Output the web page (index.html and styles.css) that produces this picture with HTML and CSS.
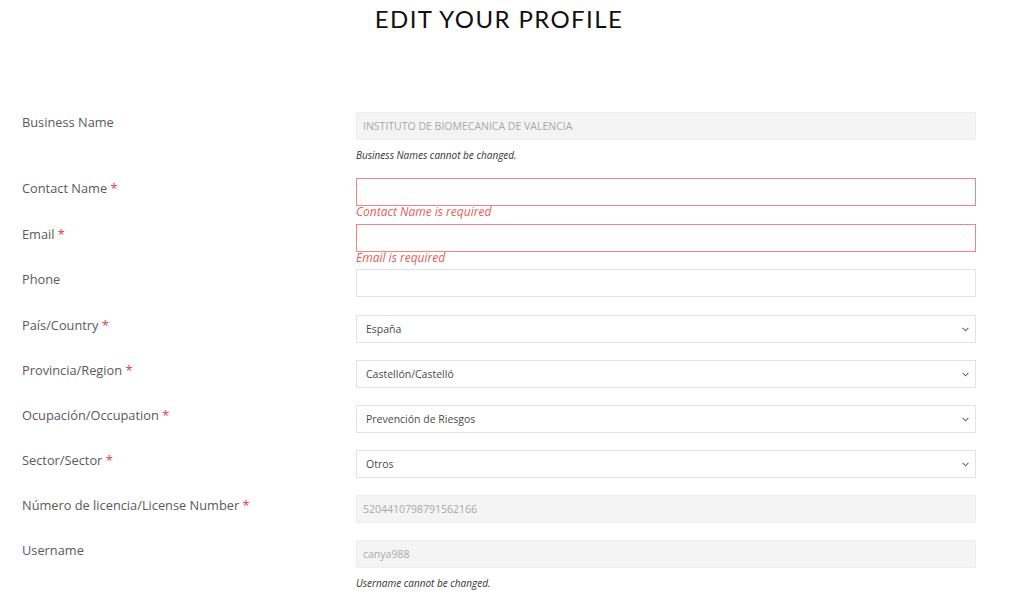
FILE: index.html
```html
<!DOCTYPE html>
<html>
<head>
<meta charset="utf-8">
<link rel="stylesheet" href="styles.css">
</head>
<body>
<div class="page">
  <h1 class="title">EDIT YOUR PROFILE</h1>
  <form class="form">
    <div class="row row-help">
      <label class="label">Business Name</label>
      <div class="field">
        <div class="input disabled">INSTITUTO DE BIOMECANICA DE VALENCIA</div>
        <div class="help">Business Names cannot be changed.</div>
      </div>
    </div>
    <div class="row row-error row-first-error">
      <label class="label">Contact Name <span class="req">*</span></label>
      <div class="field">
        <div class="input error"></div>
        <div class="err">Contact Name is required</div>
      </div>
    </div>
    <div class="row row-error">
      <label class="label">Email <span class="req">*</span></label>
      <div class="field">
        <div class="input error"></div>
        <div class="err">Email is required</div>
      </div>
    </div>
    <div class="row row-phone">
      <label class="label">Phone</label>
      <div class="field">
        <div class="input"></div>
      </div>
    </div>
    <div class="row">
      <label class="label">País/Country <span class="req">*</span></label>
      <div class="field">
        <div class="input select">España<svg class="chev" viewBox="0 0 7 5" width="7" height="5"><path d="M0.6 0.8 L3.5 3.8 L6.4 0.8" fill="none" stroke="#6a6a6a" stroke-width="1.1"/></svg></div>
      </div>
    </div>
    <div class="row">
      <label class="label">Provincia/Region <span class="req">*</span></label>
      <div class="field">
        <div class="input select">Castellón/Castelló<svg class="chev" viewBox="0 0 7 5" width="7" height="5"><path d="M0.6 0.8 L3.5 3.8 L6.4 0.8" fill="none" stroke="#6a6a6a" stroke-width="1.1"/></svg></div>
      </div>
    </div>
    <div class="row">
      <label class="label">Ocupación/Occupation <span class="req">*</span></label>
      <div class="field">
        <div class="input select">Prevención de Riesgos<svg class="chev" viewBox="0 0 7 5" width="7" height="5"><path d="M0.6 0.8 L3.5 3.8 L6.4 0.8" fill="none" stroke="#6a6a6a" stroke-width="1.1"/></svg></div>
      </div>
    </div>
    <div class="row">
      <label class="label">Sector/Sector <span class="req">*</span></label>
      <div class="field">
        <div class="input select">Otros<svg class="chev" viewBox="0 0 7 5" width="7" height="5"><path d="M0.6 0.8 L3.5 3.8 L6.4 0.8" fill="none" stroke="#6a6a6a" stroke-width="1.1"/></svg></div>
      </div>
    </div>
    <div class="row">
      <label class="label">Número de licencia/License Number <span class="req">*</span></label>
      <div class="field">
        <div class="input disabled">5204410798791562166</div>
      </div>
    </div>
    <div class="row row-help">
      <label class="label">Username</label>
      <div class="field">
        <div class="input disabled">canya988</div>
        <div class="help">Username cannot be changed.</div>
      </div>
    </div>
  </form>
</div>
</body>
</html>
```

FILE: styles.css
```css
html, body {
  margin: 0;
  padding: 0;
  background: #fff;
}
.page {
  width: 998px;
  box-sizing: border-box;
  padding: 0 22px;
  font-family: "Open Sans", "Noto Sans", sans-serif;
}
.title {
  margin: 0;
  padding-top: 5px;
  height: 112px;
  box-sizing: border-box;
  text-align: center;
  font-family: Lato, sans-serif;
  font-weight: 400;
  font-size: 24px;
  letter-spacing: 1.4px;
  line-height: 28px;
  color: #111;
}
.form {
  display: flex;
  flex-direction: column;
}
.row {
  display: grid;
  grid-template-columns: 334px 1fr;
  margin-bottom: 17px;
}
.row-error {
  margin-bottom: 5px;
}
.row-first-error {
  margin-bottom: 6px;
}
.row-phone {
  margin-bottom: 18px;
}
.row-help {
  margin-bottom: 16px;
}
.label {
  font-size: 12.8px;
  color: #5a5a5a;
  line-height: 20px;
}
.req {
  color: #e23b3b;
}
.input {
  height: 28px;
  box-sizing: border-box;
  border: 1px solid #e3e3e3;
  padding: 0 6px;
  font-size: 10.5px;
  line-height: 26px;
  color: #4a4a4a;
  background: #fff;
  display: flex;
  align-items: center;
  justify-content: space-between;
}
.input.select {
  padding: 0 6px 0 9px;
}
.input.disabled {
  background: #f4f4f4;
  border-color: #eeeeee;
  color: #a8a8a8;
}
.input.error {
  border-color: #f08585;
}
.err {
  font-size: 12px;
  line-height: 12px;
  font-style: italic;
  color: #e85c5c;
}
.help {
  margin-top: 8px;
  font-size: 10px;
  line-height: 14px;
  font-style: italic;
  color: #333;
}
```
